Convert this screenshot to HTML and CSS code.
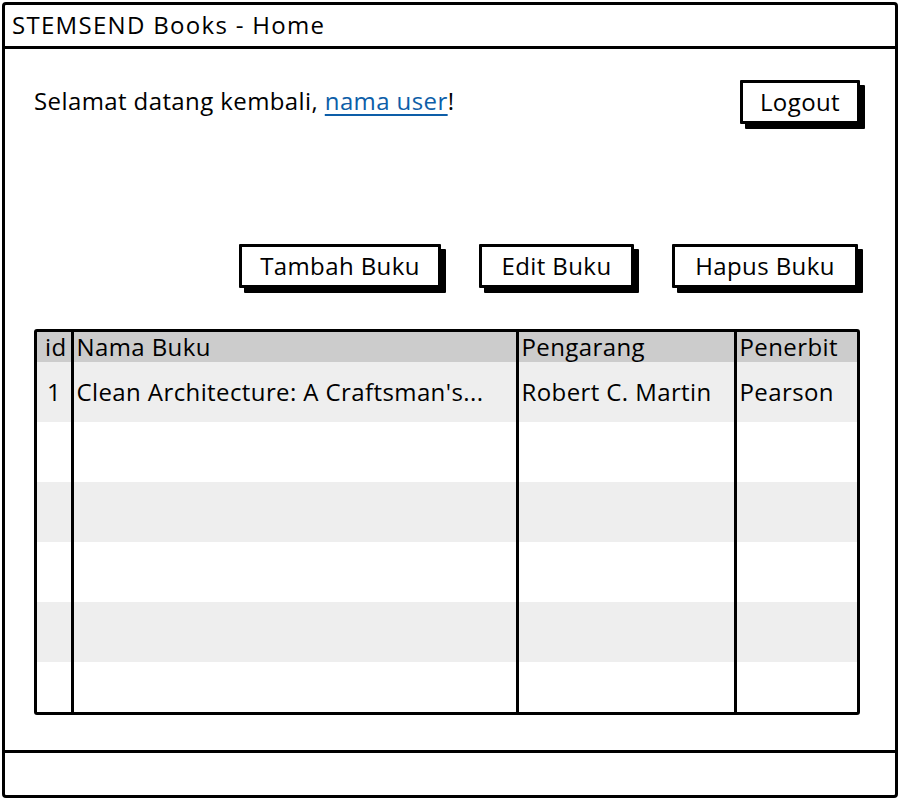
FILE: index.html
```html
<!DOCTYPE html>
<html>
<head>
<meta charset="utf-8">
<link rel="stylesheet" href="styles.css">
</head>
<body>
<div class="window">
  <div class="titlebar">STEMSEND Books - Home</div>
  <div class="content">
    <div class="top">
      <div class="welcome">Selamat datang kembali, <a class="link" href="#">nama user</a>!</div>
      <button class="btn logout">Logout</button>
    </div>
    <div class="actions">
      <button class="btn tambah">Tambah Buku</button>
      <button class="btn edit">Edit Buku</button>
      <button class="btn hapus">Hapus Buku</button>
    </div>
    <div class="tablewrap">
      <table class="grid">
        <colgroup>
          <col class="c-id"><col class="c-nama"><col class="c-peng"><col class="c-pen">
        </colgroup>
        <thead>
          <tr><th class="hid">id</th><th>Nama Buku</th><th>Pengarang</th><th>Penerbit</th></tr>
        </thead>
        <tbody>
          <tr class="odd"><td class="num">1</td><td>Clean Architecture: A Craftsman's...</td><td>Robert C. Martin</td><td>Pearson</td></tr>
          <tr><td></td><td></td><td></td><td></td></tr>
          <tr class="odd"><td></td><td></td><td></td><td></td></tr>
          <tr><td></td><td></td><td></td><td></td></tr>
          <tr class="odd"><td></td><td></td><td></td><td></td></tr>
          <tr class="last"><td></td><td></td><td></td><td></td></tr>
        </tbody>
      </table>
    </div>
  </div>
  <div class="statusbar"></div>
</div>
</body>
</html>
```
FILE: styles.css
```css
* { box-sizing: border-box; }
html, body { margin: 0; padding: 0; background: #fff; }
body {
  font-family: "Open Sans", "Liberation Sans", sans-serif;
  color: #000;
  width: 900px;
  height: 800px;
  padding: 2px 2px 2px 2px;
  letter-spacing: 0.4px;
}
.window {
  width: 896px;
  height: 796px;
  border: 3px solid #000;
  border-radius: 4px;
  display: flex;
  flex-direction: column;
}
.titlebar {
  height: 44px;
  border-bottom: 3px solid #000;
  font-size: 24px;
  line-height: 40px;
  padding-left: 7px;
  letter-spacing: 1.3px;
  flex: none;
}
.content {
  flex: 1;
  padding: 28px 34px 0 28px;
  display: flex;
  flex-direction: column;
}
.top {
  display: flex;
  justify-content: space-between;
  align-items: flex-start;
  height: 167px;
}
.welcome {
  font-size: 24px;
  margin-top: 7px;
  margin-left: 1px;
}
.link {
  color: #0d5ea8;
  text-decoration: underline;
  text-underline-offset: 4px;
  text-decoration-thickness: 2px;
}
.btn {
  font-family: inherit;
  letter-spacing: inherit;
  font-size: 24px;
  color: #000;
  background: #fff;
  border: 3px solid #000;
  box-shadow: 5px 5px 0 #000;
  height: 44px;
  padding: 0 0 2px 0;
  border-radius: 1px;
}
.logout { width: 120px; margin-top: 3px; margin-right: 1px; }
.actions {
  display: flex;
  justify-content: flex-end;
  gap: 38px;
  height: 85px;
}
.tambah { width: 202px; }
.edit { width: 155px; }
.hapus { width: 186px; margin-right: 3px; }
.tablewrap {
  width: 826px;
  height: 386px;
  border: 3px solid #000;
  margin-left: 1px;
  border-radius: 3px;
  overflow: hidden;
}
.grid {
  width: 100%;
  border-collapse: collapse;
  table-layout: fixed;
  font-size: 24px;
}
.c-id { width: 35px; }
.c-nama { width: 445px; }
.c-peng { width: 218px; }
.c-pen { width: auto; }
.grid th, .grid td {
  border-left: 3px solid #000;
  padding: 0 0 0 3px;
  text-align: left;
  font-weight: normal;
  white-space: nowrap;
}
.grid td { overflow: hidden; }
.grid th:first-child, .grid td:first-child { border-left: none; }
.grid thead tr { background: #cccccc; height: 30px; }
.grid th { line-height: 30px; height: 30px; vertical-align: middle; padding-top: 0; }
.grid th.hid { padding-left: 8px; }
.grid tbody tr { height: 60px; }
.grid tbody tr.odd { background: #eeeeee; }
.grid tbody tr.last { height: 50px; }
.grid td { vertical-align: middle; padding-bottom: 2px; }
.grid td.num { padding-left: 10px; }
.statusbar {
  height: 45px;
  border-top: 3px solid #000;
  flex: none;
}
```
